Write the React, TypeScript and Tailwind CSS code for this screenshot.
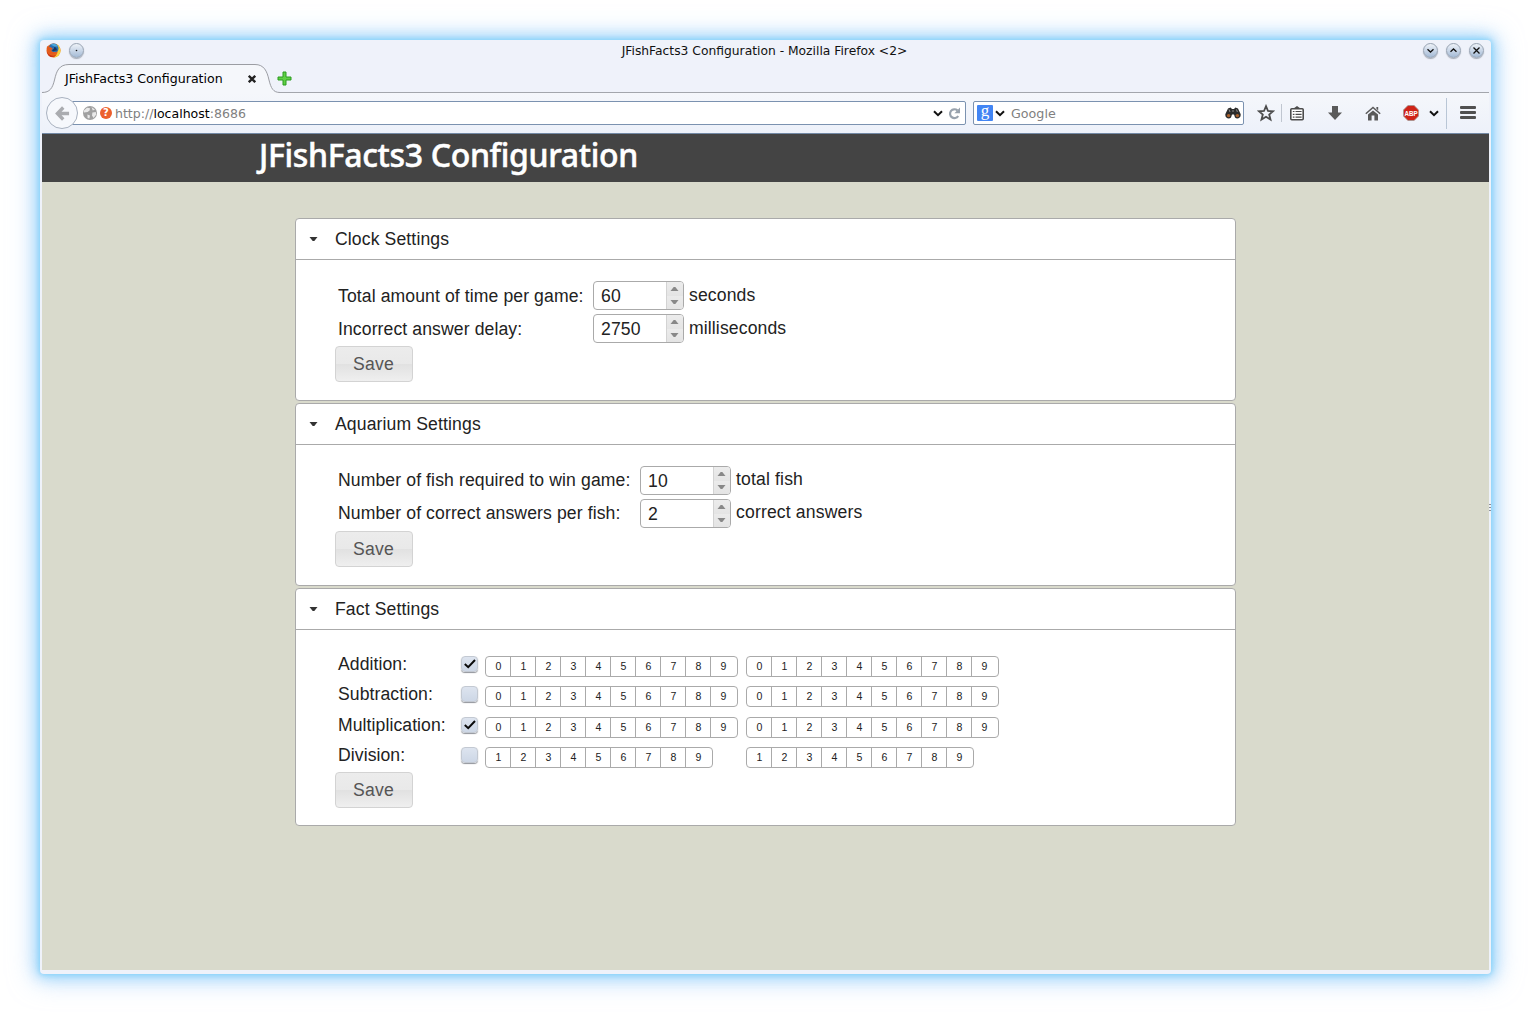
import React from "react";

const DIGITS = [0, 1, 2, 3, 4, 5, 6, 7, 8, 9];

function WindowButton({ children }: { children: React.ReactNode }) {
  return (
    <div className="flex h-[15px] w-[15px] items-center justify-center rounded-full border border-[#98a4b3] bg-linear-to-b from-[#eef2f8] to-[#a5bbd6] shadow-[0_1px_1px_rgba(90,100,115,0.5)]">
      <svg width="13" height="13" viewBox="0 0 13 13" fill="none" stroke="#111" strokeWidth="1.3" className="shrink-0">
        {children}
      </svg>
    </div>
  );
}

function FirefoxIcon() {
  return (
    <svg width="15" height="15" viewBox="0 0 15 15">
      <circle cx="7.5" cy="7.5" r="7" fill="#e8641b" />
      <path d="M11 1.2 C14 3.2 15.2 7 14.2 10 C12.8 13 10 14.7 7 14.6 C10.5 13 12 10 11.6 7 Z" fill="#f7d23e" />
      <circle cx="7.6" cy="5.4" r="4.9" fill="#2a6fb0" />
      <path d="M4.4 1.6 C7.4 -.2 11 1.2 12 3.6 L8.4 3.4 Z" fill="#49a6da" />
      <path d="M1 3 C2 4 3 3.6 4.2 4 L6.8 5.6 L5.4 7 C5.4 9 8 9.8 10.4 8.4 C9.6 11.6 6 12.4 3.4 10.6 C1 9 .4 6 1 3Z" fill="#e25a1c" />
      <path d="M6 7.6 C7.5 9 9 7.4 10.8 7.6 C11.4 5.5 9.6 4 8.2 4 L8 5.4Z" fill="#17365e" />
      <path d="M.8 8.4 C3 12.6 7 13.4 10.4 12 C7 15.6 1.4 14 .8 8.4Z" fill="#c93414" />
    </svg>
  );
}

function Chevron() {
  return (
    <svg width="10" height="7" viewBox="0 0 10 7" fill="none" stroke="#111" strokeWidth="2" className="shrink-0">
      <path d="M1 1.2 L5 5.2 L9 1.2" />
    </svg>
  );
}

function TitleBar() {
  return (
    <div className="flex h-6 items-start pt-[3px] pr-[5px] pl-[4px]">
      <div className="flex w-[101px] items-center gap-2">
        <FirefoxIcon />
        <WindowButton>
          <circle cx="6.5" cy="6.5" r="0.8" fill="#111" stroke="none" />
        </WindowButton>
      </div>
      <div className="flex-1 text-center text-[12.3px] leading-[16px] text-[#111111]">
        JFishFacts3 Configuration - Mozilla Firefox &lt;2&gt;
      </div>
      <div className="flex w-[102px] justify-end gap-2">
        <WindowButton>
          <path d="M3.5 5.2 L6.5 8 L9.5 5.2" />
        </WindowButton>
        <WindowButton>
          <path d="M3.5 7.8 L6.5 5 L9.5 7.8" />
        </WindowButton>
        <WindowButton>
          <path d="M3.5 3.5 L9.5 9.5 M9.5 3.5 L3.5 9.5" />
        </WindowButton>
      </div>
    </div>
  );
}

function TabStrip() {
  return (
    <div className="flex h-[29px]">
      <div className="relative w-[238px]">
        <svg width="238" height="29" viewBox="0 0 238 29" className="absolute inset-0">
          <path
            d="M0 28.5 C8 28.5 10.5 24 12.5 16 C14.5 7 17 .5 27 .5 H213 C222 .5 225 7 227 16 C229 24 231 28.5 238 28.5 V29 H0Z"
            fill="#f5f7fb"
          />
          <path
            d="M0 28.5 C8 28.5 10.5 24 12.5 16 C14.5 7 17 .5 27 .5 H213 C222 .5 225 7 227 16 C229 24 231 28.5 238 28.5"
            fill="none"
            stroke="#9b9da3"
          />
        </svg>
        <div className="relative flex h-[29px] items-center justify-between pr-[24px] pl-[23px]">
          <span className="text-[12.6px] leading-[16px] text-black">JFishFacts3 Configuration</span>
          <svg width="8" height="8" viewBox="0 0 8 8" stroke="#222" strokeWidth="2.3">
            <path d="M.8 .8 L7.2 7.2 M7.2 .8 L.8 7.2" />
          </svg>
        </div>
      </div>
      <div className="flex flex-1 items-center border-b border-[#a3a6ac]">
        <svg width="15" height="15" viewBox="0 0 15 15" className="-ml-[3px] mt-[1px]">
          <path
            d="M6 1 H9 V6 H14 V9 H9 V14 H6 V9 H1 V6 H6 Z"
            fill="#5fcf45"
            stroke="#2a9c1e"
            strokeLinejoin="round"
          />
        </svg>
      </div>
    </div>
  );
}

function NavBar() {
  return (
    <div className="flex h-[41px] items-center border-b border-[#7389a5] bg-linear-to-b from-[#f5f7fb] to-[#edf1fa] pl-1">
      <div className="relative z-10 flex h-8 w-8 items-center justify-center rounded-full border border-[#a9b2c0] bg-[#f6f8fc]">
        <svg width="15" height="15" viewBox="0 0 16 16" fill="none" stroke="#aaacb0" strokeWidth="3.6">
          <path d="M8.8 1.6 L2.6 8 L8.8 14.4 M3 8 H15" />
        </svg>
      </div>
      <div className="-ml-[6px] flex h-6 w-[894px] items-center rounded-r-[2px] border border-[#7b92b0] bg-white pr-1 pl-[10px]">
        <svg width="14" height="14" viewBox="0 0 14 14">
          <circle cx="7" cy="7" r="7" fill="#a0a0a0" />
          <path d="M1 4.6 L4 1.8 L7 2.2 L6.6 4.6 L4.6 6 L1 6.4Z M8.6 1.2 L12 3.4 L9.8 4.6Z M9.4 6.4 L12.8 6 L13.2 8.6 L10.6 12 L9 9.4Z M4.4 8.4 L7 9.6 L6.4 12.6 L4.6 12Z" fill="#e9e9e9" />
        </svg>
        <div className="ml-[3px] flex h-3 w-3 items-center justify-center rounded-full bg-[#ec5f2d] text-[10px] leading-none font-bold text-white">
          ?
        </div>
        <div className="ml-[3px] flex-1 pt-[2px] text-[12.55px] text-[#808080]">
          http://<span className="text-black">localhost</span>:8686
        </div>
        <Chevron />
        <svg width="13" height="13" viewBox="0 0 13 13" fill="none" className="ml-[5px]">
          <path d="M9.4 3.4 A4.4 4.4 0 1 0 10.2 9" stroke="#98a2ad" strokeWidth="2.2" />
          <path d="M12 .6 V6.2 H6.4Z" fill="#98a2ad" />
        </svg>
      </div>
      <div className="ml-[7px] flex h-6 w-[271px] items-center rounded-[2px] border border-[#7b92b0] bg-white pr-[2px] pl-[3px]">
        <div className="flex h-4 w-4 items-center justify-center rounded-[1px] bg-[#4285f4] pb-[5px] font-['Liberation_Serif',serif] text-[17px] leading-none text-white">
          g
        </div>
        <div className="ml-[2px]">
          <Chevron />
        </div>
        <div className="ml-[6px] flex-1 pt-[2px] text-[12.7px] text-[#808080]">Google</div>
        <svg width="16" height="12" viewBox="0 0 16 12">
          <path d="M3 1.4 L5.6 .4 L7 2 H9 L10.4 .4 L13 1.4 L15.6 7 C16.4 11 12 12.6 10 10.4 L9 7.4 H7 L6 10.4 C4 12.6 -.4 11 .4 7Z" fill="#2b2b2b" />
          <path d="M4 2.4 L5 5 M11.4 2.4 L12.4 5 M8 3 V5" stroke="#8a8a8a" />
          <circle cx="3.6" cy="8.6" r="1.7" fill="#a8602c" />
          <circle cx="12.4" cy="8.6" r="1.7" fill="#a8602c" />
        </svg>
      </div>
      <svg width="18" height="18" viewBox="0 0 18 18" className="ml-[13px]">
        <path
          d="M9 2.2 L11 7 L16 7.3 L12.2 10.5 L13.5 15.6 L9 12.8 L4.5 15.6 L5.8 10.5 L2 7.3 L7 7Z"
          fill="none"
          stroke="#4c4c4c"
          strokeWidth="1.8"
        />
      </svg>
      <div className="ml-[6px] h-[18px] w-px bg-[#c0c6d0]" />
      <svg width="14" height="15" viewBox="0 0 14 15" className="ml-2">
        <path d="M3.5 2.6 L7 0 L10.5 2.6Z" fill="#4c4c4c" />
        <rect x=".8" y="2.8" width="12.4" height="11" rx="1" fill="#fff" stroke="#4c4c4c" strokeWidth="1.6" />
        <path d="M2.8 5.5 H4.5 M5.5 5.5 H11.6 M2.8 8.3 H4.5 M5.5 8.3 H11.6 M2.8 11.1 H4.5 M5.5 11.1 H11.6" stroke="#4c4c4c" strokeWidth="1.2" />
      </svg>
      <svg width="14" height="14" viewBox="0 0 14 14" className="ml-[24px]">
        <path d="M4 0 H10 V6.4 H14 L7 14 L0 6.4 H4Z" fill="#5a5a5a" />
      </svg>
      <svg width="16" height="15" viewBox="0 0 16 15" className="ml-[23px]">
        <path d="M.8 7.8 L8 1.4 L15.2 7.8" fill="none" stroke="#5a5a5a" strokeWidth="1.5" />
        <path d="M11.4 1 H13.2 V4.4 L11.4 2.8Z M3 8.6 L8 4.4 L13 8.6 V14.4 H9.4 V9.6 H6.6 V14.4 H3Z" fill="#5a5a5a" />
      </svg>
      <svg width="16" height="16" viewBox="0 0 16 16" className="ml-[22px] overflow-visible">
        <path d="M4.9 .5 H11.1 L15.5 4.9 V11.1 L11.1 15.5 H4.9 L.5 11.1 V4.9Z" fill="#cf2418" stroke="#a3948f" strokeWidth=".8" />
        <g transform="translate(8 10.6) scale(.78 1)">
          <text
            textAnchor="middle"
            fontSize="8"
            fontWeight="700"
            fill="#fff"
            className="font-['Liberation_Sans',sans-serif]"
          >
            ABP
          </text>
        </g>
      </svg>
      <div className="ml-[10px]">
        <Chevron />
      </div>
      <div className="ml-[7px] h-[31px] w-px bg-[#b9c6d6]" />
      <div className="ml-[13px] flex flex-col gap-[2px] pb-px">
        <div className="h-[3px] w-4 rounded-[1px] bg-[#505050]" />
        <div className="h-[3px] w-4 rounded-[1px] bg-[#505050]" />
        <div className="h-[3px] w-4 rounded-[1px] bg-[#505050]" />
      </div>
    </div>
  );
}

function Section({ title, children }: { title: string; children: React.ReactNode }) {
  return (
    <section className="rounded-[4px] border border-[#aaaaaa] bg-white">
      <h3 className="flex h-[41px] items-center border-b border-[#aaaaaa] pl-[13px]">
        <svg width="9" height="4" viewBox="0 0 9 4">
          <path d="M.5 0 H8.5 L5.3 4 H3.7Z" fill="#333" />
        </svg>
        <span className="ml-[17px] tracking-[0.12px]">{title}</span>
      </h3>
      <div className="pl-[39px]">{children}</div>
    </section>
  );
}

function Spinner({ value }: { value: number }) {
  return (
    <div className="flex h-[29px] w-[91px] overflow-hidden rounded-[4px] border border-[#aaaaaa] bg-white">
      <div className="flex-1 pl-[7px] leading-[28px] tracking-[0.15px]">{value}</div>
      <div className="flex w-[17px] flex-col border-l border-[#d3d3d3]">
        <div className="flex flex-1 items-center bg-linear-to-b from-[#ececec] to-[#e4e4e4] pl-[3px]">
          <svg width="9" height="4" viewBox="0 0 9 4">
            <path d="M.5 4 H8.5 L5.3 0 H3.7Z" fill="#888" />
          </svg>
        </div>
        <div className="flex flex-1 items-center bg-linear-to-b from-[#ebebeb] to-[#e4e4e4] pl-[3px]">
          <svg width="9" height="4" viewBox="0 0 9 4">
            <path d="M.5 0 H8.5 L5.3 4 H3.7Z" fill="#888" />
          </svg>
        </div>
      </div>
    </div>
  );
}

function SettingRow({ label, value, unit, wide }: { label: string; value: number; unit: string; wide?: boolean }) {
  return (
    <div className="flex h-[29px]">
      <div className={wide ? "w-[302px] leading-[29px] tracking-[0.11px]" : "w-[255px] leading-[31px] tracking-[0.1px]"}>
        {label}
      </div>
      <Spinner value={value} />
      <div className={wide ? "ml-[5px] leading-[27px] tracking-[0.15px]" : "ml-[5px] leading-[29px] tracking-[0.12px]"}>
        {unit}
      </div>
    </div>
  );
}

function SaveButton() {
  return (
    <button className="block h-9 w-[78px] rounded-[4px] border border-[#d3d3d3] bg-[linear-gradient(#ececec_0%,#e9e9e9_49%,#e1e1e1_50%,#efefef_100%)] pr-px text-[17.6px] leading-[34px] tracking-[0.25px] text-[#555555]">
      Save
    </button>
  );
}

function Check({ on }: { on: boolean }) {
  return (
    <div className="-ml-px flex h-4 w-[17px] items-center justify-center rounded-[4px] border border-[#c3c9d2] bg-linear-to-b from-[#dde4ef] to-[#cdd7e6] shadow-[0_1px_1px_rgba(70,75,85,0.6)]">
      {on && (
        <svg width="12" height="10" viewBox="0 0 12 10" fill="none" stroke="#0a0a0a" strokeWidth="2" className="shrink-0">
          <path d="M.8 5 L4.2 8.2 L11 1" />
        </svg>
      )}
    </div>
  );
}

function DigitSet({ digits }: { digits: number[] }) {
  return (
    <div className="flex h-[21px] rounded-[4px] border border-[#aaaaaa] text-[10.56px] leading-[19px]">
      {digits.map((d) => (
        <div
          key={d}
          className="w-[25px] border-l border-[#aaaaaa] pl-px text-center first:w-6 first:border-l-0 last:w-[27px] last:pr-[2px]"
        >
          {d}
        </div>
      ))}
    </div>
  );
}

function FactRow({ label, on, digits }: { label: string; on: boolean; digits: number[] }) {
  return (
    <div className="flex">
      <div className="w-[124px] leading-[17px] tracking-[0.08px]">{label}</div>
      <Check on={on} />
      <div className="ml-[7px] w-[261px]">
        <div className="flex">
          <DigitSet digits={digits} />
        </div>
      </div>
      <DigitSet digits={digits} />
    </div>
  );
}

export default function App() {
  return (
    <div className="h-[1014px] w-[1531px] overflow-hidden bg-white pt-10 pl-10 font-['DejaVu_Sans',sans-serif]">
      <div className="relative flex h-[934px] w-[1451px] flex-col rounded-[4px] bg-[#eff2fa] px-[2px] pb-1 shadow-[0_0_4px_1px_rgba(125,208,250,0.7),0_0_14px_3px_rgba(125,205,250,0.75),0_1px_26px_6px_rgba(165,205,250,0.6)]">
        <TitleBar />
        <TabStrip />
        <NavBar />
        <main className="flex-1 bg-[#d9dacc] font-['Liberation_Sans',Arial,sans-serif] text-[17.6px] text-[#222222]">
          <header className="h-12 bg-[#444444] pl-[217px] font-['Noto_Sans',sans-serif] text-[32px] leading-[41px] font-medium tracking-[-0.34px] text-white [-webkit-text-stroke:0.5px_white]">
            JFishFacts3 Configuration
          </header>
          <div className="mt-9 ml-[253px] flex w-[941px] flex-col gap-[2px]">
            <Section title="Clock Settings">
              <div className="flex h-[140px] flex-col pt-[21px]">
                <div className="flex flex-col gap-1 pl-[3px]">
                  <SettingRow label="Total amount of time per game:" value={60} unit="seconds" />
                  <SettingRow label="Incorrect answer delay:" value={2750} unit="milliseconds" />
                </div>
                <div className="mt-[3px]">
                  <SaveButton />
                </div>
              </div>
            </Section>
            <Section title="Aquarium Settings">
              <div className="flex h-[140px] flex-col pt-[21px]">
                <div className="flex flex-col gap-1 pl-[3px]">
                  <SettingRow wide label="Number of fish required to win game:" value={10} unit="total fish" />
                  <SettingRow wide label="Number of correct answers per fish:" value={2} unit="correct answers" />
                </div>
                <div className="mt-[3px]">
                  <SaveButton />
                </div>
              </div>
            </Section>
            <Section title="Fact Settings">
              <div className="flex h-[195px] flex-col pt-[26px]">
                <div className="grid grid-rows-[30px_31px_30px_21px] pl-[3px]">
                  <FactRow label="Addition:" on digits={DIGITS} />
                  <FactRow label="Subtraction:" on={false} digits={DIGITS} />
                  <FactRow label="Multiplication:" on digits={DIGITS} />
                  <FactRow label="Division:" on={false} digits={DIGITS.slice(1)} />
                </div>
                <div className="mt-1">
                  <SaveButton />
                </div>
              </div>
            </Section>
          </div>
        </main>
        {/* resize grip on the window's right edge */}
        <div className="absolute top-[464px] right-0 flex flex-col gap-[2px]">
          <div className="h-px w-[2px] bg-[#8c9099]" />
          <div className="h-px w-[2px] bg-[#8c9099]" />
          <div className="h-px w-[2px] bg-[#8c9099]" />
        </div>
      </div>
    </div>
  );
}
